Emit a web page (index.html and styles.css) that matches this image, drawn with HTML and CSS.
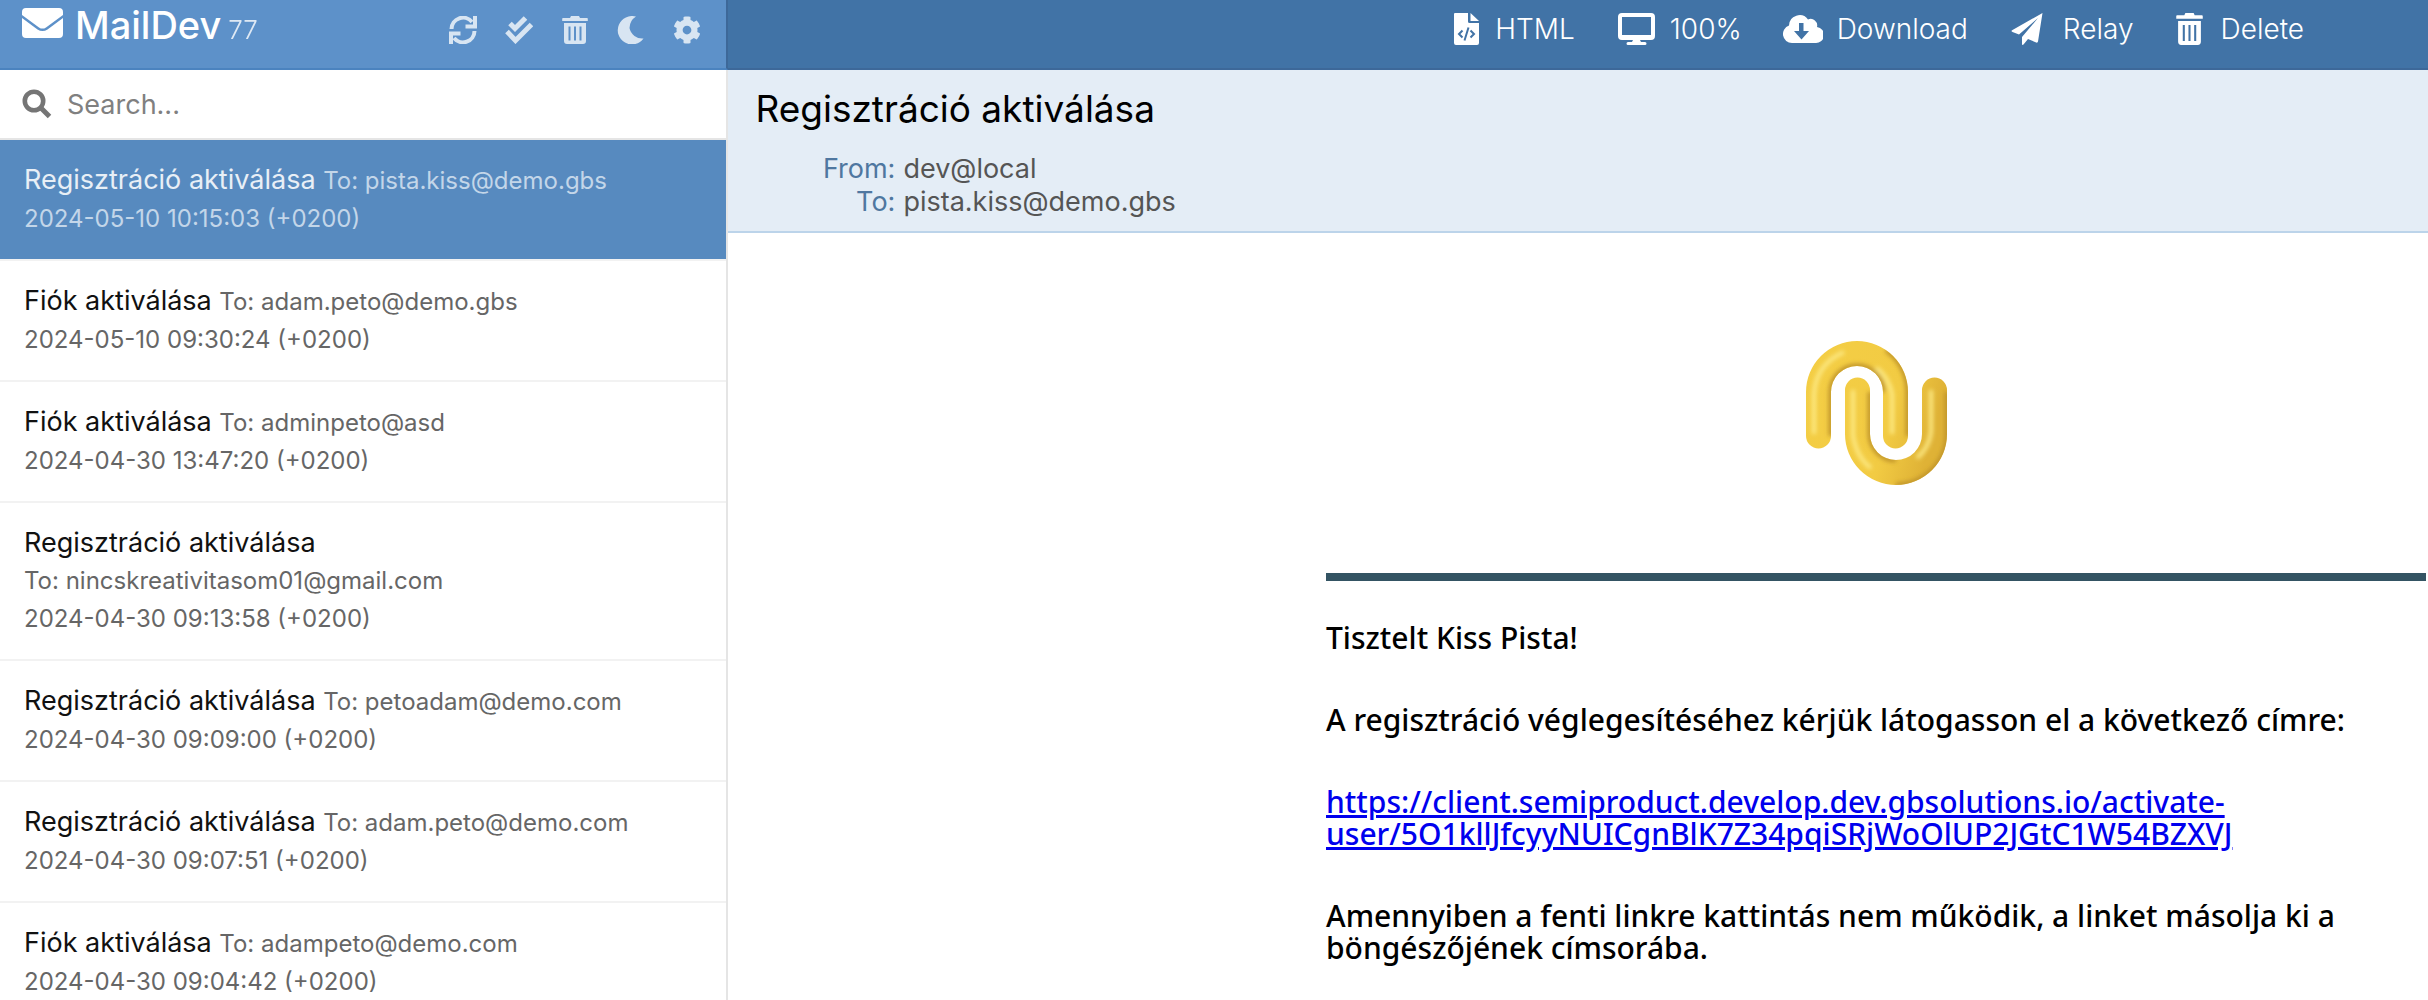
FILE: index.html
```
<!DOCTYPE html>
<html lang="hu">
<head>
    <meta charset="UTF-8">
    <meta name="viewport" content="width=device-width, initial-scale=1.0">
    <title>MailDev</title>
    <link rel="stylesheet" href="styles.css">
</head>
<body>
    <div class="app">
        <!-- Sidebar -->
        <aside class="sidebar">
            <header class="sidebar-header">
                <h1 class="logo">
                    <svg width="42" height="32" viewBox="0 0 42 32" fill="currentColor"><path d="M1 8V5a4 4 0 0 1 4-4h33a4 4 0 0 1 4 4v3L25 20.400q-3.500 2.400-7 0zM1 11l15.500 11.500q5 3.200 10 0L42 11v16a4 4 0 0 1-4 4H5a4 4 0 0 1-4-4z"/></svg>
                    <span>MailDev</span>
                    <small>77</small>
                </h1>
                <nav class="actions">
                    <button aria-label="Refresh"><svg width="28" height="28" viewBox="0 0 28 28" fill="none" stroke="currentColor" stroke-width="4"><path d="M2.500 13a11.500 11.500 0 0 1 20.500-7M25.500 15a11.500 11.500 0 0 1-20.500 7"/><path d="M16.500 10.500H26V0M11.500 17.500H2V28"/></svg></button>
                    <button aria-label="Mark all read"><svg width="28" height="28" viewBox="0 0 28 28" fill="none" stroke="currentColor" stroke-width="5"><path d="M5 7.500l5 5L20.500 2M2 15.500l8.500 9L26.500 8.500"/></svg></button>
                    <button aria-label="Delete all"><svg width="28" height="28" viewBox="0 0 28 28" fill="currentColor"><use href="#trash"/></svg></button>
                    <button aria-label="Dark mode"><svg width="28" height="28" viewBox="0 0 28 28" fill="currentColor"><path d="M19 .6A14 14 0 0 0 12.500 12 13 13 0 0 0 26.500 22.500 14.200 14.200 0 1 1 19 .6z"/></svg></button>
                    <button aria-label="Settings"><svg width="28" height="28" viewBox="0 0 28 28" fill="currentColor"><use href="#gear"/></svg></button>
                </nav>
            </header>
            <div class="search">
                <svg width="30" height="30" viewBox="0 0 30 30" fill="none" stroke="currentColor"><circle cx="12" cy="12" r="9.200" stroke-width="4.600"/><path d="M19 19l8.500 8.500" stroke-width="5"/></svg>
                <input type="text" aria-label="Search" placeholder="Search...">
            </div>
            <ul class="mail-list">
                <li><a class="mail active" href="#"><span class="subject">Regisztráció aktiválása</span> <span class="to">To: pista.kiss@demo.gbs</span><span class="date">2024-05-10 10:15:03 (+0200)</span></a></li>
                <li><a class="mail" href="#"><span class="subject">Fiók aktiválása</span> <span class="to">To: adam.peto@demo.gbs</span><span class="date">2024-05-10 09:30:24 (+0200)</span></a></li>
                <li><a class="mail" href="#"><span class="subject">Fiók aktiválása</span> <span class="to">To: adminpeto@asd</span><span class="date">2024-04-30 13:47:20 (+0200)</span></a></li>
                <li><a class="mail" href="#"><span class="subject">Regisztráció aktiválása</span> <span class="to">To: nincskreativitasom01@gmail.com</span><span class="date">2024-04-30 09:13:58 (+0200)</span></a></li>
                <li><a class="mail" href="#"><span class="subject">Regisztráció aktiválása</span> <span class="to">To: petoadam@demo.com</span><span class="date">2024-04-30 09:09:00 (+0200)</span></a></li>
                <li><a class="mail" href="#"><span class="subject">Regisztráció aktiválása</span> <span class="to">To: adam.peto@demo.com</span><span class="date">2024-04-30 09:07:51 (+0200)</span></a></li>
                <li><a class="mail" href="#"><span class="subject">Fiók aktiválása</span> <span class="to">To: adampeto@demo.com</span><span class="date">2024-04-30 09:04:42 (+0200)</span></a></li>
            </ul>
        </aside>

        <!-- Opened mail -->
        <main class="main">
            <nav class="toolbar">
                <button><svg width="28" height="32" viewBox="1 0 28 32"><path fill="currentColor" d="M3 0h13v8.500q0 1.500 1.500 1.500H27v20q0 2-2 2H4q-2 0-2-2V1q0-1 1-1zM18.500 0L27 8h-8.500z"/><path class="cut" d="M10.500 17.500l-3.500 3.500 3.500 3.500M16.500 14.500l-4 13M18.500 17.500l3.500 3.500-3.500 3.500"/></svg>HTML</button>
                <button><svg width="40" height="32" viewBox="-2 0 40 32" fill="currentColor"><path fill-rule="evenodd" d="M4 0h29a4 4 0 0 1 4 4v19a4 4 0 0 1-4 4H22l1 2h4a1.500 1.500 0 0 1 0 3H10a1.500 1.500 0 0 1 0-3h4l1-2H4a4 4 0 0 1-4-4V4a4 4 0 0 1 4-4zm0 4v18h29V4z"/></svg>100%</button>
                <button><svg width="40" height="32" viewBox="0 0 40 32"><path fill="currentColor" d="M9 30A9 9 0 0 1 6 12.500 10.500 10.500 0 0 1 25 6.500 6.500 6.500 0 0 1 34 14 8 8 0 0 1 32 30z"/><path fill="#4173a6" d="M16 10h4.500v8H26l-7.500 8.500L11 18h5z"/></svg>Download</button>
                <button><svg width="40" height="32" viewBox="-2 0 40 32" fill="currentColor"><path d="M31.500 0L27 28.500q-.3 1.500-1.800 1L17 26l-4.500 5.500q-1.500 1-1.500-.5V24L27 5 8 21.500 1.500 19q-2-1 0-2z"/></svg>Relay</button>
                <button><svg width="32" height="32" viewBox="0 0 32 32" fill="currentColor"><use href="#trash" width="29" height="32"/></svg>Delete</button>
            </nav>
            <section class="mail-info">
                <h2>Regisztráció aktiválása</h2>
                <dl>
                    <dt>From:</dt><dd>dev@local</dd>
                    <dt>To:</dt><dd>pista.kiss@demo.gbs</dd>
                </dl>
            </section>
            <article class="mail-body">
                <svg class="brand" width="144" height="146" viewBox="0 0 144 146" fill="none">
                    <defs>
                        <linearGradient id="tube" gradientUnits="userSpaceOnUse" x1="0" y1="0" x2="144" y2="40">
                            <stop offset="0" stop-color="#f4ce45"/>
                            <stop offset="0.700" stop-color="#f2cb43"/>
                            <stop offset="1" stop-color="#dfb236"/>
                        </linearGradient>
                        <filter id="soft"><feGaussianBlur stdDeviation="2"/></filter>
                        <clipPath id="shape"><path d="M2 52a51 51 0 0 1 102 0v44a12 12 0 0 1-25 0V52a26 26 0 0 0-52 0v44a12 12 0 0 1-25 0zM41 50a12 12 0 0 1 25 0v44a26 26 0 0 0 52 0V50a12 12 0 0 1 25 0v44a51 51 0 0 1-102 0z"/></clipPath>
                    </defs>
                    <g clip-path="url(#shape)">
                        <path fill="url(#tube)" d="M0 0h144v146H0z"/>
                        <g filter="url(#soft)">
                            <path class="shade" d="M27 96V52a26 26 0 0 1 52 0M104 96V52a51 51 0 0 0-22-42M66 52v42a26 26 0 0 0 26 26M143 52v42a51 51 0 0 1-51 51"/>
                            <path class="shine" d="M10 94V54q2-30 30-42M88 94V54q-4-18-16-26M49 50v46q4 22 18 32M127 50v42q-2 16-14 26"/>
                        </g>
                    </g>
                </svg>
                <hr>
                <p>Tisztelt Kiss Pista!</p>
                <p>A regisztráció véglegesítéséhez kérjük látogasson el a következő címre:</p>
                <p><a href="#">https://client.semiproduct.develop.dev.gbsolutions.io/activate-user/5O1kllJfcyyNUICgnBlK7Z34pqiSRjWoOlUP2JGtC1W54BZXVJ</a></p>
                <p>Amennyiben a fenti linkre kattintás nem működik, a linket másolja ki a böngészőjének címsorába.</p>
            </article>
        </main>
    </div>

    <!-- Shared icons -->
    <svg class="sprite">
        <symbol id="trash" viewBox="0 0 28 28" preserveAspectRatio="none"><path fill-rule="evenodd" d="M2 2h7l1-2h8l1 2h7a.8.8 0 0 1 .8.800V5H1.200V2.800A.8.8 0 0 1 2 2zM3 7h22v18a3 3 0 0 1-3 3H6a3 3 0 0 1-3-3zm4.500 3.500v14h2v-14zm5.500 0v14h2v-14zm5.500 0v14h2v-14z"/></symbol>
        <symbol id="gear" viewBox="0 0 512 512"><path d="M487.400 315.700l-42.600-24.600c4.300-23.200 4.300-47 0-70.200l42.600-24.600c4.900-2.800 7.100-8.600 5.500-14-11.100-35.600-30-67.800-54.700-94.600-3.800-4.100-10-5.100-14.800-2.300L380.800 110c-17.900-15.400-38.500-27.300-60.800-35.100V25.800c0-5.600-3.900-10.500-9.400-11.700-36.700-8.200-74.300-7.800-109.200 0-5.500 1.200-9.400 6.100-9.400 11.700V75c-22.200 7.900-42.800 19.800-60.800 35.100L88.700 85.500c-4.900-2.800-11-1.900-14.800 2.300-24.700 26.700-43.600 58.900-54.700 94.600-1.700 5.400.6 11.200 5.500 14L67.300 221c-4.300 23.200-4.300 47 0 70.200l-42.600 24.600c-4.900 2.800-7.100 8.600-5.500 14 11.100 35.600 30 67.800 54.700 94.600 3.800 4.100 10 5.100 14.800 2.300l42.600-24.600c17.900 15.400 38.500 27.300 60.800 35.100v49.200c0 5.600 3.900 10.500 9.400 11.700 36.700 8.200 74.300 7.800 109.200 0 5.500-1.200 9.400-6.100 9.400-11.700v-49.200c22.200-7.900 42.800-19.800 60.800-35.100l42.600 24.600c4.900 2.800 11 1.900 14.800-2.300 24.700-26.700 43.600-58.900 54.700-94.600 1.500-5.500-.7-11.300-5.600-14.100zM256 336c-44.100 0-80-35.900-80-80s35.900-80 80-80 80 35.900 80 80-35.900 80-80 80z"/></symbol>
    </svg>
</body>
</html>
```
FILE: styles.css
```
* {
    box-sizing: border-box;
}

body {
    margin: 0;
    font-family: Inter, "Liberation Sans", sans-serif;
    font-size: 27px;
    color: #111;
    background-color: #fff;
}

button {
    padding: 0;
    border: none;
    background: none;
    font: inherit;
    color: inherit;
    cursor: pointer;
}

svg {
    display: block;
    flex: none;
}

.app {
    display: flex;
    height: 100vh;
    overflow: hidden;
}

/* Sidebar */
.sidebar {
    display: flex;
    flex-direction: column;
    flex: none;
    width: 30%;
}

.sidebar-header {
    display: flex;
    flex: none;
    justify-content: space-between;
    height: 70px;
    padding: 0 25px 0 21px;
    background-color: #5d91c9;
    border-right: 2px solid #3d6899;
    border-bottom: 2px solid #4b83bf;
    color: #fff;
}

.logo {
    display: flex;
    align-items: baseline;
    gap: 7px;
    margin: 0;
    font-size: 38px;
    font-weight: 500;
    line-height: 50px;
}

.logo svg {
    margin-right: 5px;
}

.logo small {
    font-size: 26px;
    font-weight: 300;
    opacity: 0.8;
}

.actions {
    display: flex;
    align-items: center;
    gap: 28px;
    height: 60px;
    color: #d8e5f2;
}

.search {
    display: flex;
    flex: none;
    align-items: center;
    gap: 15px;
    height: 70px;
    padding: 0 22px;
    border-right: 2px solid #e5e5e5;
    border-bottom: 2px solid #e5e5e5;
    color: #757575;
}

.search input {
    flex: 1;
    padding: 0;
    border: none;
    outline: none;
    font: inherit;
}

.search input::placeholder {
    color: #808080;
}

.mail-list {
    flex: 1;
    margin: 0;
    padding: 0;
    border-right: 2px solid #e5e5e5;
    list-style: none;
}

.mail {
    display: block;
    padding: 21px 24px 22px;
    border-bottom: 2px solid #f2f2f2;
    line-height: 37px;
    color: #111;
    text-decoration: none;
}

.to,
.date {
    font-size: 24px;
    color: #666;
}

.to {
    display: inline-block;
}

.date {
    display: block;
    margin-top: 1px;
}

.mail.active {
    background-color: #578abf;
    color: #e8eff6;
}

.mail.active .to,
.mail.active .date {
    color: #c3d6e9;
}

/* Toolbar */
.main {
    flex: 1;
    min-width: 0;
}

.toolbar {
    display: flex;
    justify-content: flex-end;
    gap: 41px;
    height: 70px;
    padding: 0 124px 10px 0;
    background-color: #4173a6;
    border-bottom: 2px solid #3d6899;
    color: #fff;
}

.toolbar button {
    display: flex;
    align-items: center;
    gap: 14px;
    font-size: 28px;
    font-weight: 300;
}

.cut {
    fill: none;
    stroke: #4173a6;
    stroke-width: 2;
}

/* Mail header */
.mail-info {
    padding: 16px 27px 13px;
    background-color: #e4edf6;
    border-bottom: 2px solid #bcd4ea;
}

.mail-info h2 {
    margin: 0 0 20px;
    font-size: 37px;
    font-weight: 400;
    line-height: 46px;
    color: #000;
}

.mail-info dl {
    display: grid;
    grid-template-columns: 140px 1fr;
    column-gap: 8px;
    margin: 0;
    line-height: 33px;
}

.mail-info dt {
    text-align: right;
    color: #4f77a0;
}

.mail-info dd {
    margin: 0;
    color: #555;
}

/* Mail content */
.mail-body {
    max-width: 1100px;
    margin: 107px 2px 0 auto;
    font-family: "Noto Sans", sans-serif;
    font-size: 30px;
    font-weight: 500;
    line-height: 32px;
    color: #000;
}

.brand {
    margin: 0 auto;
}

.shade {
    stroke: #c0942a;
    stroke-width: 5;
}

.shine {
    stroke: #fdea85;
    stroke-width: 4;
}

.mail-body hr {
    height: 8px;
    margin: 87px 0 41px;
    border: none;
    background-color: #345463;
}

.mail-body p {
    margin: 0 0 50px;
}

.mail-body a {
    color: #0000ee;
}

.sprite {
    display: none;
}
```
